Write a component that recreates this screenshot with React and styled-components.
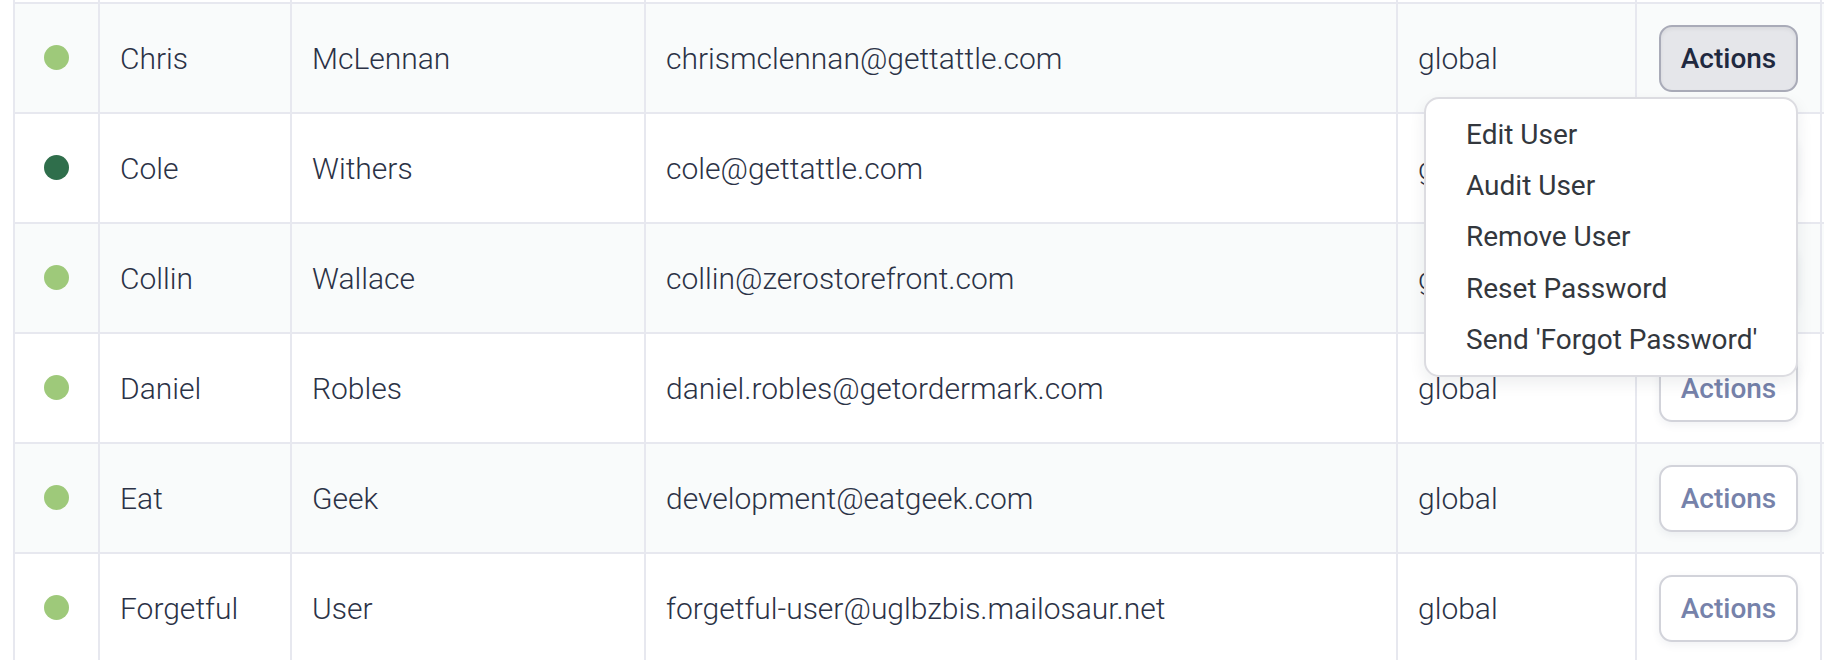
import React from "react";
import styled, { createGlobalStyle } from "styled-components";

const GlobalStyle = createGlobalStyle`
  html, body {
    margin: 0;
    padding: 0;
    background: #ffffff;
  }
  body {
    font-family: Roboto, "Liberation Sans", sans-serif;
    color: #2b3246;
  }
`;

const COLUMNS = "85px 192px 354px 752px 239px 185px";

const users = [
  { first: "Chris", last: "McLennan", email: "chrismclennan@gettattle.com", scope: "global", dark: false, open: true },
  { first: "Cole", last: "Withers", email: "cole@gettattle.com", scope: "global", dark: true },
  { first: "Collin", last: "Wallace", email: "collin@zerostorefront.com", scope: "global", dark: false },
  { first: "Daniel", last: "Robles", email: "daniel.robles@getordermark.com", scope: "global", dark: false },
  { first: "Eat", last: "Geek", email: "development@eatgeek.com", scope: "global", dark: false },
  { first: "Forgetful", last: "User", email: "forgetful-user@uglbzbis.mailosaur.net", scope: "global", dark: false }
];

const menuItems = [
  "Edit User",
  "Audit User",
  "Remove User",
  "Reset Password",
  "Send 'Forgot Password'"
];

const Page = styled.div`
  height: 660px;
  overflow: hidden;
  padding-left: 13px;
`;

const Table = styled.div`
  width: 1809px;
  border-left: 2px solid #e7e8ef;
`;

const Row = styled.div`
  display: grid;
  grid-template-columns: ${COLUMNS};
  box-sizing: border-box;
  height: ${p => (p.stub ? "4px" : "110px")};
  border-bottom: 2px solid #e7e8ef;
  background: ${p => (p.striped ? "#f9fbfb" : "#ffffff")};
`;

const Cell = styled.div`
  position: relative;
  display: flex;
  align-items: center;
  justify-content: ${p => (p.center ? "center" : "flex-start")};
  padding-left: ${p => (p.center ? "0" : "20px")};
  border-right: 2px solid #e7e8ef;
  font-size: 30px;
  font-weight: 300;
  color: #2b3246;
  white-space: nowrap;
`;

const Dot = styled.span`
  width: 25px;
  height: 25px;
  border-radius: 50%;
  background: ${p => (p.dark ? "#2f6e4b" : "#9ec97a")};
  margin-top: -2px;
`;

const ButtonWrap = styled.div`
  position: relative;
`;

const ActionsButton = styled.button`
  box-sizing: border-box;
  width: 139px;
  height: 67px;
  border-radius: 13px;
  border: 2px solid ${p => (p.active ? "#a9abb8" : "#d2d3da")};
  background: ${p => (p.active ? "#e5e6ea" : "#ffffff")};
  color: ${p => (p.active ? "#1f2940" : "#7682aa")};
  font-family: Roboto, "Liberation Sans", sans-serif;
  font-size: 28px;
  font-weight: 500;
  cursor: pointer;
  box-shadow: ${p =>
    p.active
      ? "inset 0 2px 4px rgba(0, 0, 0, 0.06)"
      : "0 3px 8px rgba(40, 50, 80, 0.07)"};
`;

const Menu = styled.ul`
  position: absolute;
  top: calc(100% + 5px);
  right: 0;
  z-index: 10;
  box-sizing: border-box;
  width: 374px;
  margin: 0;
  padding: 10px 0;
  list-style: none;
  background: #ffffff;
  border: 2px solid #dcdce1;
  border-radius: 15px;
  box-shadow: 0 6px 16px rgba(30, 35, 50, 0.08);
`;

const MenuItem = styled.li`
  height: 51.4px;
  display: flex;
  align-items: center;
  padding-left: 40px;
  font-size: 28px;
  font-weight: 400;
  color: #33373d;
  white-space: nowrap;
  cursor: pointer;
`;

const UserRow = ({ user, striped }) => (
  <Row striped={striped}>
    <Cell center>
      <Dot dark={user.dark} />
    </Cell>
    <Cell>{user.first}</Cell>
    <Cell>{user.last}</Cell>
    <Cell>{user.email}</Cell>
    <Cell>{user.scope}</Cell>
    <Cell center>
      <ButtonWrap>
        <ActionsButton active={user.open}>Actions</ActionsButton>
        {user.open && (
          <Menu>
            {menuItems.map(item => (
              <MenuItem key={item}>{item}</MenuItem>
            ))}
          </Menu>
        )}
      </ButtonWrap>
    </Cell>
  </Row>
);

const App = () => (
  <Page>
    <GlobalStyle />
    <Table>
      <Row stub>
        {[0, 1, 2, 3, 4, 5].map(i => (
          <Cell key={i} />
        ))}
      </Row>
      {users.map((user, i) => (
        <UserRow key={user.email} user={user} striped={i % 2 === 0} />
      ))}
    </Table>
  </Page>
);

export default App;
